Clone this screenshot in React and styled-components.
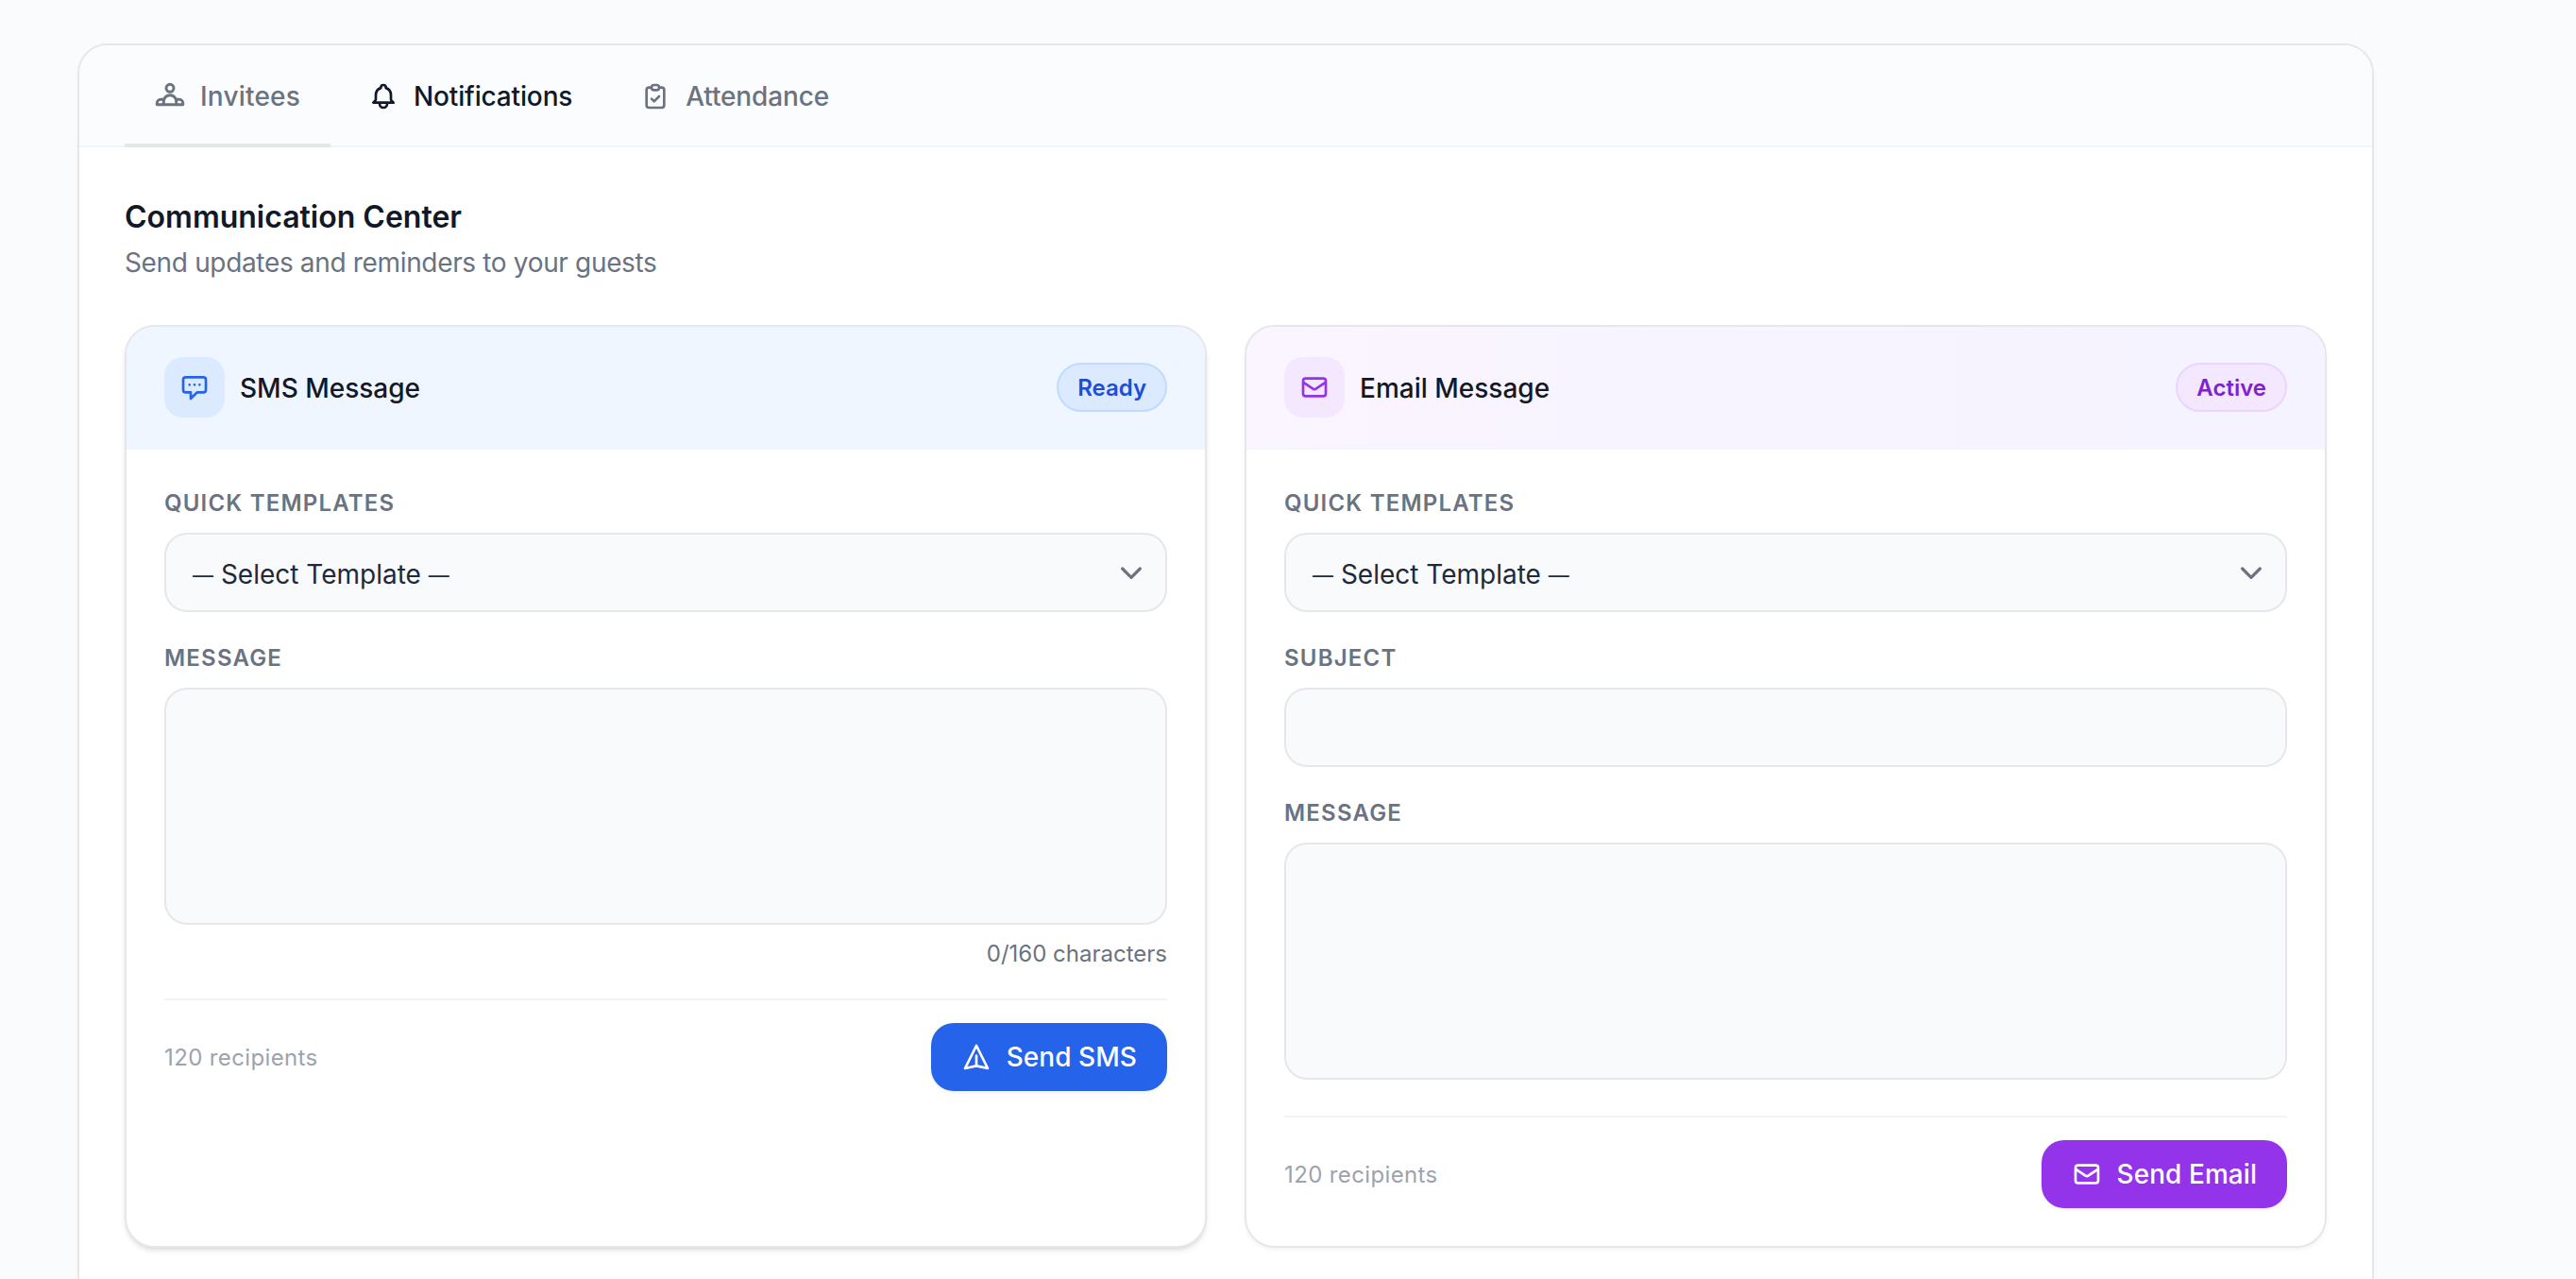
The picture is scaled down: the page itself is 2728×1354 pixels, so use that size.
import React from "react";
import styled, { createGlobalStyle } from "styled-components";
import {
  HiOutlineBell,
  HiOutlineChatAlt,
  HiOutlineClipboardCheck,
  HiOutlineMail,
  HiOutlinePaperAirplane,
} from "react-icons/hi";

const GlobalStyle = createGlobalStyle`
  html, body {
    margin: 0;
    height: 100%;
    overflow: hidden;
    background: #fafbfd;
    font-family: Inter, "Liberation Sans", sans-serif;
  }
  * {
    box-sizing: border-box;
  }
`;

const themes = {
  blue: {
    header: "#eff6ff",
    line: "#eff6ff",
    iconBg: "#dbeafe",
    icon: "#2563eb",
    badgeBg: "#dbeafe",
    badgeBorder: "#bfdbfe",
    badgeText: "#1d4ed8",
    button: "#2563eb",
  },
  purple: {
    header: "linear-gradient(to right, #faf5ff, #f5f3ff)",
    line: "#f7f4ff",
    iconBg: "#f3e8ff",
    icon: "#9333ea",
    badgeBg: "#f3e8ff",
    badgeBorder: "#e9d5ff",
    badgeText: "#7e22ce",
    button: "#9333ea",
  },
};

const Page = styled.div`
  padding: 46px 214px 0 82px;
  height: 1354px;
  overflow: hidden;
`;

const Panel = styled.div`
  background: #fff;
  border: 2px solid #e5e7eb;
  border-radius: 32px;
  overflow: hidden;
  box-shadow: 0 2px 4px rgba(0, 0, 0, 0.03);
`;

const Tabs = styled.nav`
  display: flex;
  gap: 8px;
  padding: 0 48px;
  height: 108px;
  background: #fbfcfe;
  border-bottom: 2px solid #f3f4f6;
`;

const Tab = styled.div`
  display: flex;
  align-items: center;
  gap: 16px;
  padding: 0 32px;
  font-size: 28px;
  font-weight: 500;
  letter-spacing: ${(p) => (p.$underlined ? "0.2px" : "-0.15px")};
  margin-bottom: -2px;
  color: ${(p) => (p.$current ? "#111827" : "#6b7280")};
  border-top: 4px solid transparent;
  border-bottom: 4px solid ${(p) => (p.$underlined ? "#e5e7eb" : "transparent")};
  svg {
    width: 32px;
    height: 32px;
    flex-shrink: 0;
  }
`;

const Content = styled.div`
  padding: 50px 48px 60px;
`;

const Title = styled.h2`
  margin: 0 0 4px;
  font-size: 32px;
  line-height: 48px;
  font-weight: 600;
  color: #111827;
`;

const Subtitle = styled.p`
  margin: 0 0 46px;
  font-size: 28px;
  line-height: 40px;
  letter-spacing: -0.34px;
  color: #6b7280;
`;

const Columns = styled.div`
  display: grid;
  grid-template-columns: 1fr 1fr;
  gap: 40px;
`;

const Card = styled.section`
  background: #fff;
  border: 2px solid #e5e7eb;
  border-radius: 32px;
  overflow: hidden;
  box-shadow: ${(p) =>
    p.$raised
      ? "0 4px 6px -1px rgba(0, 0, 0, 0.1), 0 2px 4px -2px rgba(0, 0, 0, 0.1)"
      : "0 2px 4px rgba(0, 0, 0, 0.05)"};
`;

const CardHeader = styled.header`
  display: flex;
  align-items: center;
  justify-content: space-between;
  padding: 32px 40px;
  background: ${(p) => themes[p.$tone].header};
  border-bottom: 2px solid ${(p) => themes[p.$tone].line};
`;

const HeaderLeft = styled.div`
  display: flex;
  align-items: center;
  gap: 16px;
`;

const IconBox = styled.div`
  width: 64px;
  height: 64px;
  border-radius: 20px;
  display: flex;
  align-items: center;
  justify-content: center;
  background: ${(p) => themes[p.$tone].iconBg};
  color: ${(p) => themes[p.$tone].icon};
  svg {
    width: 32px;
    height: 32px;
  }
`;

const CardTitle = styled.h3`
  margin: 0;
  font-size: 28px;
  line-height: 36px;
  padding-top: 1px;
  font-weight: 500;
  color: #111827;
`;

const Badge = styled.span`
  display: inline-flex;
  align-items: center;
  height: 52px;
  padding: 0 20px;
  border-radius: 26px;
  font-size: 24px;
  font-weight: 600;
  background: ${(p) => themes[p.$tone].badgeBg};
  border: 2px solid ${(p) => themes[p.$tone].badgeBorder};
  color: ${(p) => themes[p.$tone].badgeText};
`;

const CardBody = styled.div`
  padding: 40px;
  display: flex;
  flex-direction: column;
`;

const Field = styled.div`
  margin-bottom: 32px;
`;

const Label = styled.label`
  display: block;
  margin-bottom: 14px;
  font-size: 24px;
  line-height: 34px;
  font-weight: 600;
  letter-spacing: 0.05em;
  text-transform: uppercase;
  color: #6b7280;
`;

const Select = styled.div`
  height: 84px;
  display: flex;
  align-items: center;
  justify-content: space-between;
  padding: 0 20px 0 28px;
  background: #f9fafb;
  border: 2px solid #e5e7eb;
  border-radius: 24px;
  font-size: 28px;
  color: #1f2937;
  svg {
    width: 32px;
    height: 32px;
    color: #6b7280;
  }
`;

const SelectValue = styled.span`
  padding-top: 3px;
`;

// the em dash is narrower in the reference than in the installed Inter
const Dash = styled.span`
  font-size: 22px;
  vertical-align: 1px;
`;

const Input = styled.input`
  display: block;
  width: 100%;
  height: 84px;
  background: #f9fafb;
  border: 2px solid #e5e7eb;
  border-radius: 24px;
`;

const TextArea = styled.textarea`
  display: block;
  width: 100%;
  height: 251px;
  resize: none;
  background: #f9fafb;
  border: 2px solid #e5e7eb;
  border-radius: 24px;
`;

const Counter = styled.div`
  margin-top: 15px;
  font-size: 24px;
  line-height: 32px;
  text-align: right;
  color: #6b7280;
`;

const Footer = styled.div`
  display: flex;
  align-items: center;
  justify-content: space-between;
  padding-top: 24px;
  margin-top: ${(p) => p.$top}px;
  border-top: 2px solid #f3f4f6;
`;

const Recipients = styled.span`
  font-size: 24px;
  letter-spacing: 0.37px;
  color: #9ca3af;
`;

const SendButton = styled.button`
  display: flex;
  align-items: center;
  gap: 16px;
  height: 72px;
  padding: 0 32px;
  border: 0;
  border-radius: 24px;
  font: 500 28px Inter, "Liberation Sans", sans-serif;
  letter-spacing: 0.05px;
  color: #fff;
  background: ${(p) => themes[p.$tone].button};
  box-shadow: 0 2px 4px rgba(0, 0, 0, 0.05);
  svg {
    width: 32px;
    height: 32px;
  }
`;

const InviteesIcon = () => (
  <svg viewBox="0 0 24 24" fill="none" stroke="currentColor" strokeWidth="2.2" strokeLinecap="round" strokeLinejoin="round">
    <circle cx="12" cy="5.5" r="3" />
    <path d="M7 18.5V16a5 5 0 0 1 10 0v2.5" />
    <path d="M7 14.5H4.5a2.8 2.8 0 0 0-2.8 2.8v1.2h20.6v-1.2a2.8 2.8 0 0 0-2.8-2.8H17" />
  </svg>
);

const Chevron = () => (
  <svg viewBox="0 0 24 24" fill="none" stroke="currentColor" strokeWidth="2.4" strokeLinecap="round" strokeLinejoin="round">
    <path d="M5 9l7 7 7-7" />
  </svg>
);

const TemplateSelect = () => (
  <Select>
    <SelectValue>
      <Dash>—</Dash> Select Template <Dash>—</Dash>
    </SelectValue>
    <Chevron />
  </Select>
);

const App = () => {
  return (
    <>
      <GlobalStyle />
      <Page>
        <Panel>
          <Tabs>
            <Tab $underlined>
              <InviteesIcon />
              Invitees
            </Tab>
            <Tab $current>
              <HiOutlineBell />
              Notifications
            </Tab>
            <Tab>
              <HiOutlineClipboardCheck />
              Attendance
            </Tab>
          </Tabs>
          <Content>
            <Title>Communication Center</Title>
            <Subtitle>Send updates and reminders to your guests</Subtitle>
            <Columns>
              <Card $raised>
                <CardHeader $tone="blue">
                  <HeaderLeft>
                    <IconBox $tone="blue">
                      <HiOutlineChatAlt />
                    </IconBox>
                    <CardTitle>SMS Message</CardTitle>
                  </HeaderLeft>
                  <Badge $tone="blue">Ready</Badge>
                </CardHeader>
                <CardBody>
                  <Field>
                    <Label>Quick Templates</Label>
                    <TemplateSelect />
                  </Field>
                  <Label>Message</Label>
                  <TextArea />
                  <Counter>0/160 characters</Counter>
                  <Footer $top={31}>
                    <Recipients>120 recipients</Recipients>
                    <SendButton $tone="blue">
                      <HiOutlinePaperAirplane />
                      Send SMS
                    </SendButton>
                  </Footer>
                </CardBody>
              </Card>
              <Card>
                <CardHeader $tone="purple">
                  <HeaderLeft>
                    <IconBox $tone="purple">
                      <HiOutlineMail />
                    </IconBox>
                    <CardTitle>Email Message</CardTitle>
                  </HeaderLeft>
                  <Badge $tone="purple">Active</Badge>
                </CardHeader>
                <CardBody>
                  <Field>
                    <Label>Quick Templates</Label>
                    <TemplateSelect />
                  </Field>
                  <Field>
                    <Label>Subject</Label>
                    <Input />
                  </Field>
                  <Label>Message</Label>
                  <TextArea />
                  <Footer $top={38}>
                    <Recipients>120 recipients</Recipients>
                    <SendButton $tone="purple">
                      <HiOutlineMail />
                      Send Email
                    </SendButton>
                  </Footer>
                </CardBody>
              </Card>
            </Columns>
          </Content>
        </Panel>
      </Page>
    </>
  );
};

export default App;
